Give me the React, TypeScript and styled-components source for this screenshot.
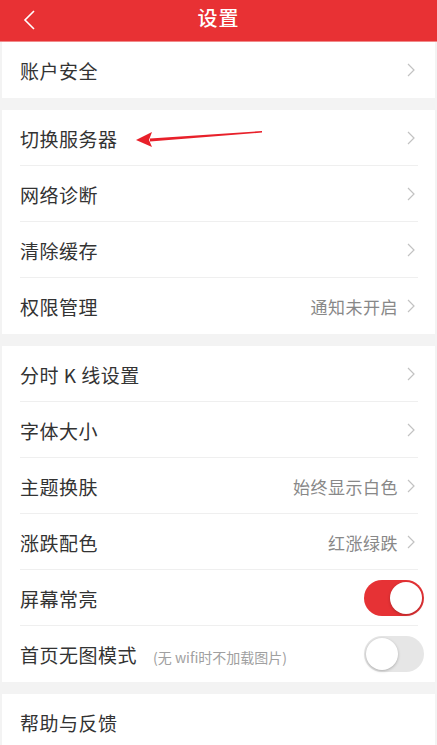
import React, { useState } from "react";
import styled, { createGlobalStyle } from "styled-components";

const Global = createGlobalStyle`
  html, body { margin: 0; padding: 0; background: #f3f3f3; }
  body { font-family: "Noto Sans CJK SC", "Noto Sans", sans-serif; }
  * { box-sizing: border-box; }
`;

const Page = styled.div`
  position: relative;
  width: 437px;
  height: 745px;
  overflow: hidden;
  background: #f3f3f3;
`;

const Header = styled.header`
  height: 42px;
  background: #e83134;
  display: flex;
  align-items: center;
  justify-content: center;
  position: relative;
  border-bottom: 1px solid #f08a8a;
`;

const Back = styled.button`
  position: absolute;
  left: 18px;
  top: 8px;
  width: 22px;
  height: 24px;
  border: 0;
  padding: 0;
  background: transparent;
  display: flex;
  align-items: center;
  justify-content: center;
`;

const Title = styled.h1`
  margin: 0 0 6px;
  color: #fff;
  font-size: 20px;
  font-weight: 500;
  letter-spacing: 1px;
`;

const Group = styled.section`
  background: #fff;
  margin: 0 2px 12px;
  &:last-child { margin-bottom: 0; }
`;

const Row = styled.div<{ $last?: boolean }>`
  height: 56px;
  display: flex;
  align-items: center;
  padding: 0 20px 0 18px;
  position: relative;
  &::after {
    content: "";
    display: ${(p) => (p.$last ? "none" : "block")};
    position: absolute;
    left: 18px;
    right: 17px;
    bottom: 0;
    height: 1px;
    background: #efefef;
  }
`;

const Label = styled.span`
  color: #333;
  font-size: 19px;
  letter-spacing: 0.5px;
  display: flex;
  align-items: baseline;
  gap: 16px;
`;

const Note = styled.span`
  color: #a0a0a0;
  font-size: 14px;
  letter-spacing: 0;
`;

const Right = styled.span<{ $switch?: boolean }>`
  margin-left: auto;
  margin-right: ${(p) => (p.$switch ? "-9px" : "0")};
  display: flex;
  align-items: center;
  gap: 9px;
`;

const Value = styled.span`
  color: #888;
  font-size: 17px;
  letter-spacing: 0.5px;
`;

const Track = styled.button<{ $on: boolean }>`
  width: 60px;
  height: 36px;
  border-radius: 18px;
  border: 0;
  padding: 2px;
  background: ${(p) => (p.$on ? "#e63235" : "#e6e6e6")};
  display: flex;
  justify-content: ${(p) => (p.$on ? "flex-end" : "flex-start")};
  cursor: pointer;
`;

const Knob = styled.span`
  width: 32px;
  height: 32px;
  border-radius: 50%;
  background: #fff;
  box-shadow: 0 1px 3px rgba(0, 0, 0, 0.25);
`;

const Overlay = styled.svg`
  position: absolute;
  left: 0;
  top: 0;
  pointer-events: none;
`;

const Chevron = () => (
  <svg width="8" height="14" viewBox="0 0 8 14">
    <path d="M1 1 L7 7 L1 13" fill="none" stroke="#c2c2c2" strokeWidth="1.2" />
  </svg>
);

type Item = { label: string; value?: string; note?: string; toggle?: boolean; on?: boolean; noArrow?: boolean };

const groups: Item[][] = [
  [{ label: "账户安全" }],
  [{ label: "切换服务器" }, { label: "网络诊断" }, { label: "清除缓存" }, { label: "权限管理", value: "通知未开启" }],
  [
    { label: "分时 K 线设置" },
    { label: "字体大小" },
    { label: "主题换肤", value: "始终显示白色" },
    { label: "涨跌配色", value: "红涨绿跌" },
    { label: "屏幕常亮", toggle: true, on: true },
    { label: "首页无图模式", note: "(无 wifi时不加载图片)", toggle: true, on: false },
  ],
  [{ label: "帮助与反馈", noArrow: true }],
];

const Toggle = ({ initial }: { initial: boolean }) => {
  const [on, setOn] = useState(initial);
  return (
    <Track $on={on} onClick={() => setOn(!on)}>
      <Knob />
    </Track>
  );
};

export default function App() {
  return (
    <Page>
      <Global />
      <Header>
        <Back aria-label="返回">
          <svg width="14" height="20" viewBox="0 0 14 20">
            <path d="M12 1 L3 10 L12 19" fill="none" stroke="#fff" strokeWidth="1.6" />
          </svg>
        </Back>
        <Title>设置</Title>
      </Header>
      {groups.map((g, gi) => (
        <Group key={gi}>
          {g.map((it, i) => (
            <Row key={it.label} $last={i === g.length - 1}>
              <Label>
                {it.label}
                {it.note && <Note>{it.note}</Note>}
              </Label>
              {it.toggle ? (
                <Right $switch>
                  <Toggle initial={!!it.on} />
                </Right>
              ) : it.noArrow ? null : (
                <Right>
                  {it.value && <Value>{it.value}</Value>}
                  <Chevron />
                </Right>
              )}
            </Row>
          ))}
        </Group>
      ))}
      <Overlay width="437" height="745" viewBox="0 0 437 745">
        <path d="M262 131 L150 138.5 L150 141.5 L262 132.5 Z" fill="#e8202a" />
        <path d="M136 140 L152 132 L149 140 L152 147 Z" fill="#e8202a" />
      </Overlay>
    </Page>
  );
}
